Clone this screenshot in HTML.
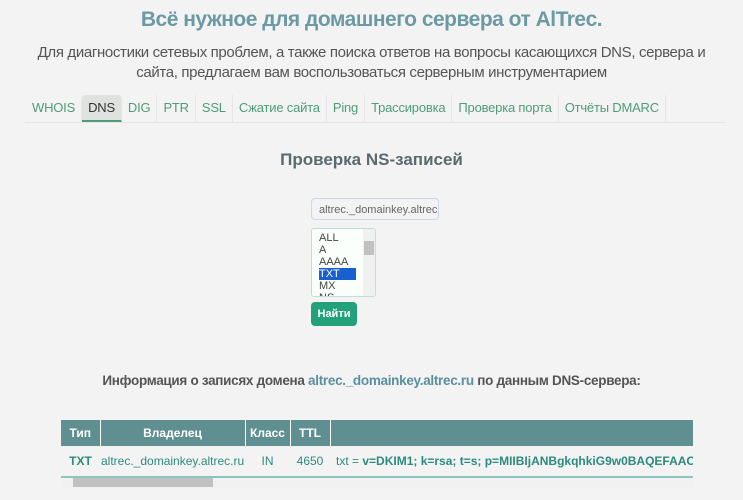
<!DOCTYPE html>
<html><head><meta charset="utf-8"><style>
body{margin:0;width:743px;height:500px;background:#f3f3f3;font-family:"Liberation Sans",sans-serif;position:relative;overflow:hidden;color:#555}
.a{position:absolute;white-space:nowrap}
h1{position:absolute;left:0;width:743px;top:8px;margin:0;text-align:center;font-size:21px;color:#6b9aa5;font-weight:bold;letter-spacing:-0.5px}
.sub{left:0;width:743px;text-align:center;font-size:15px;line-height:20px;top:43px;color:#555;letter-spacing:-0.35px}
.tabs{left:25px;top:95px;width:700px;height:27px;border-bottom:1px solid #e6e6e6;display:flex;padding-left:1px}
.tabs span{font-size:13px;color:#4f9c78;padding:0 6px;line-height:25px;border-right:1px solid #e6e6e6;letter-spacing:-0.2px}
.tabs span.on{background:#dfe2df;color:#333;border-bottom:2px solid #4f9c78;border-radius:4px 4px 0 0}
table{border-collapse:collapse;font-size:12px;table-layout:fixed;width:700px}
td{overflow:hidden;white-space:nowrap}
</style></head><body>
<h1>Всё нужное для домашнего сервера от AlTrec.</h1>
<div class="a sub">Для диагностики сетевых проблем, а также поиска ответов на вопросы касающихся DNS, сервера и<br>сайта, предлагаем вам воспользоваться серверным инструментарием</div>
<div class="a tabs"><span>WHOIS</span><span class="on">DNS</span><span>DIG</span><span>PTR</span><span>SSL</span><span>Сжатие сайта</span><span>Ping</span><span>Трассировка</span><span>Проверка порта</span><span>Отчёты DMARC</span></div>
<div class="a" style="left:0;width:743px;text-align:center;top:150px;font-size:17px;font-weight:bold;color:#5a6a70">Проверка NS-записей</div>
<div class="a" style="left:311px;top:198px;width:128px;height:22px;border:1px solid #cdd8ee;border-radius:4px;background:#f3f3f3;font-size:11px;line-height:22px;padding-left:7px;overflow:hidden;box-sizing:border-box;color:#666">altrec._domainkey.altrec.ru</div>
<div class="a" style="left:311px;top:228px;width:63px;height:67px;border:1px solid #bfe0d6;border-radius:3px;background:#fbfffb;overflow:hidden;font-size:11px;line-height:12px;color:#444">
<div style="padding:3px 0 0 7px">ALL<br>A<br>AAAA<br><span style="background:#1a5fd0;color:#fff;display:inline-block;width:37px">TXT</span><br>MX<br>NS</div>
<div style="position:absolute;right:0;top:0;width:12px;height:67px;background:#f0f0f0"><div style="margin:12px 1px 0;height:14px;background:#c1c1c1"></div></div></div>
<div class="a" style="left:311px;top:302px;width:46px;height:24px;background:#22a17a;border-radius:4px;color:#fff;font-size:11px;font-weight:bold;text-align:center;line-height:24px">Найти</div>
<div class="a" style="left:0;width:743px;text-align:center;top:373px;font-size:13.5px;font-weight:bold;color:#555;letter-spacing:-0.3px">Информация о записях домена <span style="color:#5a8fa0">altrec._domainkey.altrec.ru</span> по данным DNS-сервера:</div>
<div class="a" style="left:61px;top:420px;width:632px;height:56px;overflow:hidden;border-bottom:2px solid #8bc7c0">
<table>
<colgroup><col style="width:39px"><col style="width:145px"><col style="width:45px"><col style="width:40px"><col style="width:431px"></colgroup>
<tr style="background:#5f8f91;color:#fff;font-weight:bold;height:26px"><td style="text-align:center;border-right:1px solid #fff">Тип</td><td style="text-align:center;border-right:1px solid #fff">Владелец</td><td style="text-align:center;border-right:1px solid #fff">Класс</td><td style="text-align:center;border-right:1px solid #fff">TTL</td><td></td></tr>
<tr style="height:30px;color:#2d8a7e"><td style="text-align:center;font-weight:bold">TXT</td><td style="text-align:center">altrec._domainkey.altrec.ru</td><td style="text-align:center">IN</td><td style="text-align:center">4650</td><td style="padding-left:6px">txt = <b>v=DKIM1; k=rsa; t=s; p=MIIBIjANBgkqhkiG9w0BAQEFAAOCAQ8AMIIBCgKCAQEA</b></td></tr>
</table></div>
<div class="a" style="left:61px;top:478px;width:632px;height:10px;background:#f1f1f1"><div style="position:absolute;left:12px;top:0;width:140px;height:9px;background:#c1c1c1"></div></div>
</body></html>
